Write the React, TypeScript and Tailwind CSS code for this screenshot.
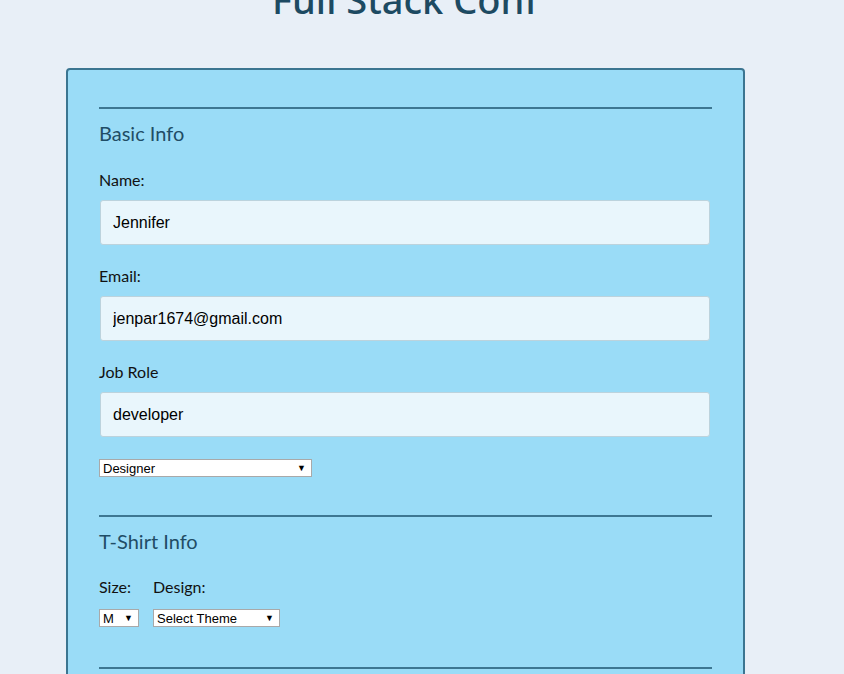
import React from 'react'

const body = "font-['Lato',sans-serif]"

function Field({ label, value }: { label: string; value: string }) {
  return (
    <div className="mt-[21px]">
      <label className="block text-[16px] leading-[20px] text-[#111]">{label}</label>
      <input
        readOnly
        value={value}
        className="mx-[1px] mt-[10px] block h-[45px] w-[610px] rounded-[3px] border border-[#bcd3dd] bg-[#e9f6fc] px-[12px] font-['Liberation_Sans',Arial,sans-serif] text-[16px] text-black outline-none"
      />
    </div>
  )
}

function FakeSelect({ text, width }: { text: string; width: string }) {
  return (
    <div
      className={`flex h-[18px] items-center justify-between border border-[#a9a9a9] bg-white pl-[3px] pr-[5px] font-['Liberation_Sans',Arial,sans-serif] text-[13px] leading-none text-black ${width}`}
    >
      <span>{text}</span>
      <span className="text-[9px]">▼</span>
    </div>
  )
}

export default function App() {
  return (
    <div className={`min-h-[674px] w-full overflow-hidden bg-[#e8eff7] ${body}`}>
      <div className="w-[810px]">
        <h1 className="mt-[-23px] text-center font-['Noto_Sans',sans-serif] text-[38px] leading-[44px] font-medium text-[#1d4a62]">
          Full Stack Conf
        </h1>
        <div className="ml-[66px] mt-[47px] w-[679px] rounded-t-[4px] border-2 border-[#3b7591] bg-[#9adcf7] px-[31px] pt-[37px] pb-[40px]">
          <section className="border-t-2 border-[#3d7792]">
            <h2 className="mt-[13px] text-[20px] leading-[22px] text-[#1f4d66]">Basic Info</h2>
            <div className="pt-[5px]">
              <Field label="Name:" value="Jennifer" />
              <Field label="Email:" value="jenpar1674@gmail.com" />
              <Field label="Job Role" value="developer" />
            </div>
            <div className="mt-[22px]">
              <FakeSelect text="Designer" width="w-[213px]" />
            </div>
          </section>

          <section className="mt-[38px] border-t-2 border-[#3d7792]">
            <h2 className="mt-[13px] text-[20px] leading-[22px] text-[#1f4d66]">T-Shirt Info</h2>
            <div className="mt-[25px] flex gap-[14px]">
              <div>
                <div className="text-[16px] leading-[20px] text-[#111]">Size:</div>
                <div className="mt-[12px]">
                  <FakeSelect text="M" width="w-[40px]" />
                </div>
              </div>
              <div>
                <div className="text-[16px] leading-[20px] text-[#111]">Design:</div>
                <div className="mt-[12px]">
                  <FakeSelect text="Select Theme" width="w-[127px]" />
                </div>
              </div>
            </div>
          </section>

          <section className="mt-[40px] h-[60px] border-t-2 border-[#3d7792]" />
        </div>
      </div>
    </div>
  )
}
